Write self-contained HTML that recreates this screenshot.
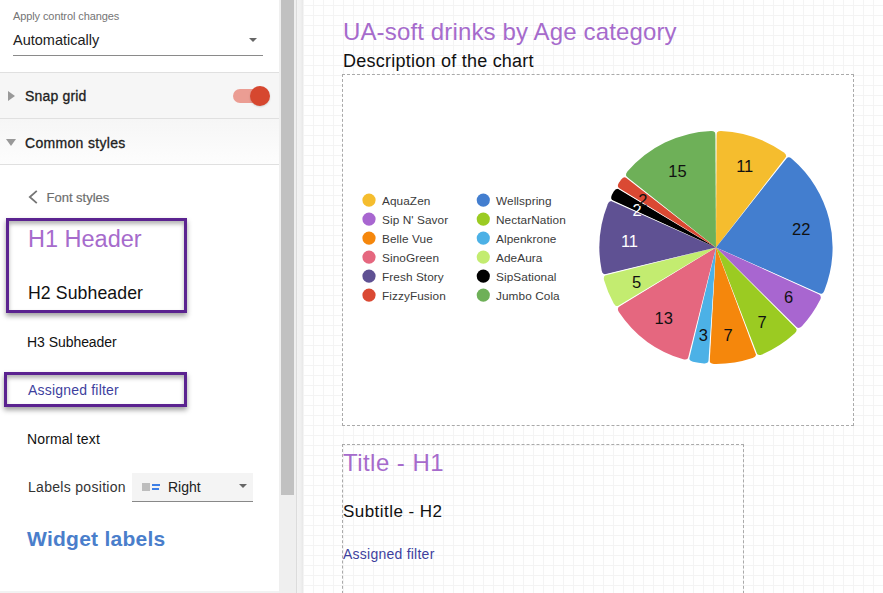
<!DOCTYPE html>
<html><head><meta charset="utf-8">
<style>
*{margin:0;padding:0;box-sizing:border-box;}
html,body{width:883px;height:593px;overflow:hidden;background:#fff;font-family:"Liberation Sans",sans-serif;}
.abs{position:absolute;}
#side{position:absolute;left:0;top:0;width:279px;height:593px;background:#fff;}
#scroll{position:absolute;left:279px;top:0;width:17px;height:593px;background:#efefef;}
#thumb{position:absolute;left:281px;top:0;width:13px;height:495px;background:#c1c1c1;}
#sep{position:absolute;left:296px;top:0;width:1px;height:593px;background:#dcdcdc;}
#strip{position:absolute;left:297px;top:0;width:6px;height:593px;background:linear-gradient(to right,#f3f3f3,#f0f0f0 60%,#e8e8e8);}
#canvas{position:absolute;left:302px;top:0;width:581px;height:593px;background-color:#fff;
 background-image:linear-gradient(to right,#f4f4f4 1px,transparent 1px),linear-gradient(to bottom,#f4f4f4 1px,transparent 1px);
 background-size:10px 10px;background-position:1px 5px;}
.t{position:absolute;white-space:nowrap;}
.med{-webkit-text-stroke:0.3px #212121;}
</style></head><body>
<div id="side">
  <div class="t" style="left:13px;top:10px;font-size:11px;letter-spacing:-0.1px;color:#757575;">Apply control changes</div>
  <div class="t" style="left:13px;top:31.5px;font-size:14.5px;color:#212121;">Automatically</div>
  <div class="abs" style="left:248.5px;top:37.5px;width:0;height:0;border-left:4px solid transparent;border-right:4px solid transparent;border-top:4.5px solid #666;"></div>
  <div class="abs" style="left:13px;top:55px;width:250px;height:1px;background:#8a8a8a;"></div>
  <div class="abs" style="left:0;top:72px;width:279px;height:1px;background:#e0e0e0;"></div>
  <div class="abs" style="left:0;top:73px;width:279px;height:45px;background:#f6f6f6;"></div>
  <div class="abs" style="left:0;top:118px;width:279px;height:1px;background:#e0e0e0;"></div>
  <div class="abs" style="left:0;top:119px;width:279px;height:45px;background:linear-gradient(#f6f6f6,#fdfdfd);"></div>
  <div class="abs" style="left:0;top:164px;width:279px;height:1px;background:#e0e0e0;"></div>
  <div class="abs" style="left:8px;top:91px;width:0;height:0;border-top:5px solid transparent;border-bottom:5px solid transparent;border-left:7px solid #999;"></div>
  <div class="t med" style="left:25px;top:88px;font-size:14px;letter-spacing:0.18px;color:#212121;">Snap grid</div>
  <div class="abs" style="left:233px;top:89px;width:34px;height:14px;border-radius:7px;background:#eb9d93;"></div>
  <div class="abs" style="left:250px;top:86px;width:20px;height:20px;border-radius:50%;background:#d6472f;box-shadow:0 1px 2px rgba(0,0,0,.15);"></div>
  <div class="abs" style="left:6px;top:139px;width:0;height:0;border-left:5px solid transparent;border-right:5px solid transparent;border-top:7px solid #999;"></div>
  <div class="t med" style="left:25px;top:135px;font-size:14px;letter-spacing:0.32px;color:#212121;">Common styles</div>
  <svg class="abs" style="left:28px;top:190px;" width="12" height="15"><path d="M8.8,0.8 L1.8,7 L8.8,13.2" fill="none" stroke="#757575" stroke-width="1.8"/></svg>
  <div class="t" style="left:46.5px;top:190px;font-size:13px;color:#6e6e6e;-webkit-text-stroke:0.2px #6e6e6e;">Font styles</div>
  <div class="abs" style="left:6px;top:218px;width:181px;height:95px;border:3px solid #5b2390;box-shadow:0 3px 5px rgba(0,0,0,.38), inset 0 3px 4px rgba(0,0,0,.3);"></div>
  <div class="t" style="left:28px;top:226px;font-size:23.5px;letter-spacing:0px;color:#a66bcc;">H1 Header</div>
  <div class="t" style="left:28px;top:283px;font-size:17.7px;letter-spacing:0.08px;color:#111;">H2 Subheader</div>
  <div class="t" style="left:27px;top:334px;font-size:14px;letter-spacing:-0.05px;color:#111;">H3 Subheader</div>
  <div class="abs" style="left:4px;top:372px;width:183px;height:35px;border:3px solid #5b2390;box-shadow:0 3px 5px rgba(0,0,0,.38), inset 0 3px 4px rgba(0,0,0,.3);"></div>
  <div class="t" style="left:28px;top:382px;font-size:14px;letter-spacing:0.2px;color:#3e3f9e;">Assigned filter</div>
  <div class="t" style="left:27px;top:430.5px;font-size:14px;letter-spacing:0.12px;color:#111;">Normal text</div>
  <div class="t" style="left:28px;top:479px;font-size:14px;letter-spacing:0.3px;color:#333;">Labels position</div>
  <div class="abs" style="left:132px;top:473px;width:121px;height:29px;background:#f4f4f4;border-bottom:1px solid #888;"></div>
  <div class="abs" style="left:142px;top:483px;width:8px;height:8px;background:#bdbdbd;"></div>
  <div class="abs" style="left:152px;top:483.5px;width:8px;height:2px;background:#3d7fe6;"></div>
  <div class="abs" style="left:152px;top:488.3px;width:6.5px;height:2px;background:#3d7fe6;"></div>
  <div class="t" style="left:168px;top:479px;font-size:14px;color:#212121;">Right</div>
  <div class="abs" style="left:238.5px;top:483.7px;width:0;height:0;border-left:4.2px solid transparent;border-right:4.2px solid transparent;border-top:4.6px solid #666;"></div>
  <div class="t" style="left:27px;top:527px;font-size:21px;letter-spacing:0.25px;font-weight:bold;color:#4a7ecb;">Widget labels</div>
  <div class="abs" style="left:0;top:591px;width:279px;height:2px;background:#f2f2f2;"></div>
</div>
<div id="scroll"></div>
<div id="thumb"></div>
<div id="sep"></div>
<div id="canvas"></div>
<div id="strip"></div>
<div class="t" style="left:343px;top:18px;font-size:24px;letter-spacing:0.14px;color:#a66bcc;">UA-soft drinks by Age category</div>
<div class="t" style="left:343px;top:51px;font-size:18px;letter-spacing:0.24px;color:#111;">Description of the chart</div>
<div class="abs" style="left:342px;top:74px;width:512px;height:352px;border:1px dashed #aaa;background:#fff;"></div>
<div class="abs" style="left:342px;top:444px;width:402px;height:160px;border:1px dashed #aaa;"></div>
<div class="t" style="left:343px;top:449px;font-size:24px;letter-spacing:0.45px;color:#a66bcc;">Title - H1</div>
<div class="t" style="left:343px;top:501.5px;font-size:17px;letter-spacing:0.45px;color:#111;">Subtitle - H2</div>
<div class="t" style="left:343px;top:545.5px;font-size:14px;letter-spacing:0.24px;color:#3e3f9e;">Assigned filter</div>
<svg class="abs" style="left:0;top:0;" width="883" height="593"><path d="M716,247.4 L716.00,135.80 Q716.00,130.80 721.00,130.91 A116.6,116.6 0 0 1 783.91,152.62 Q787.91,155.61 784.83,159.55 Z" fill="#f5bd2e" /><path d="M716,247.4 L784.83,159.55 Q787.91,155.61 791.78,158.78 A116.6,116.6 0 0 1 824.28,290.65 Q822.33,295.25 817.77,293.20 Z" fill="#437ecf" /><path d="M716,247.4 L817.77,293.20 Q822.33,295.25 820.18,299.77 A116.6,116.6 0 0 1 801.91,326.24 Q798.45,329.85 794.91,326.31 Z" fill="#a866d0" /><path d="M716,247.4 L794.91,326.31 Q798.45,329.85 794.84,333.31 A116.6,116.6 0 0 1 761.98,354.55 Q757.35,356.42 755.57,351.75 Z" fill="#9bcb22" /><path d="M716,247.4 L755.57,351.75 Q757.35,356.42 752.64,358.10 A116.6,116.6 0 0 1 713.96,363.98 Q708.96,363.79 709.26,358.80 Z" fill="#f5870c" /><path d="M716,247.4 L709.26,358.80 Q708.96,363.79 703.98,363.38 A116.6,116.6 0 0 1 692.97,361.70 Q688.10,360.61 689.29,355.76 Z" fill="#4cb1e6" /><path d="M716,247.4 L689.29,355.76 Q688.10,360.61 683.27,359.31 A116.6,116.6 0 0 1 618.89,311.94 Q616.22,307.72 620.49,305.13 Z" fill="#e5677f" /><path d="M716,247.4 L620.49,305.13 Q616.22,307.72 613.72,303.39 A116.6,116.6 0 0 1 604.09,280.13 Q602.79,275.30 607.64,274.11 Z" fill="#c3ec70" /><path d="M716,247.4 L607.64,274.11 Q602.79,275.30 601.70,270.43 A116.6,116.6 0 0 1 607.72,204.15 Q609.67,199.55 614.23,201.60 Z" fill="#5f5193" /><path d="M716,247.4 L614.23,201.60 Q609.67,199.55 611.82,195.03 A116.6,116.6 0 0 1 613.72,191.41 Q616.22,187.08 620.49,189.67 Z" fill="#000000" /><path d="M716,247.4 L620.49,189.67 Q616.22,187.08 618.89,182.86 A116.6,116.6 0 0 1 621.22,179.49 Q624.21,175.49 628.15,178.57 Z" fill="#da4933" /><path d="M716,247.4 L628.15,178.57 Q624.21,175.49 627.38,171.62 A116.6,116.6 0 0 1 711.00,130.91 Q716.00,130.80 716.00,135.80 Z" fill="#6eb058" /><path d="M716,247.4 L715.35,127.80 L716.65,127.80 Z" fill="#fff"/><path d="M716,247.4 L789.25,152.85 L790.27,153.66 Z" fill="#fff"/><path d="M716,247.4 L825.33,295.89 L824.79,297.08 Z" fill="#fff"/><path d="M716,247.4 L801.03,331.51 L800.11,332.43 Z" fill="#fff"/><path d="M716,247.4 L759.02,359.00 L757.80,359.46 Z" fill="#fff"/><path d="M716,247.4 L709.43,366.82 L708.13,366.74 Z" fill="#fff"/><path d="M716,247.4 L688.01,363.68 L686.75,363.37 Z" fill="#fff"/><path d="M716,247.4 L613.99,309.83 L613.31,308.72 Z" fill="#fff"/><path d="M716,247.4 L600.03,276.65 L599.72,275.39 Z" fill="#fff"/><path d="M716,247.4 L606.67,198.91 L607.21,197.72 Z" fill="#fff"/><path d="M716,247.4 L613.31,186.08 L613.99,184.97 Z" fill="#fff"/><path d="M716,247.4 L621.45,174.15 L622.26,173.13 Z" fill="#fff"/><g font-family="Liberation Sans, sans-serif" font-size="16.5" text-anchor="middle"><text x="744.7" y="171.7" fill="#111">11</text><text x="801.3" y="234.9" fill="#111">22</text><text x="788.5" y="302.9" fill="#111">6</text><text x="762.0" y="327.6" fill="#111">7</text><text x="728.1" y="340.6" fill="#111">7</text><text x="703.4" y="340.8" fill="#111">3</text><text x="663.8" y="323.7" fill="#111">13</text><text x="636.7" y="287.7" fill="#111">5</text><text x="629.5" y="247.1" fill="#fff">11</text><text x="637.2" y="215.6" fill="#fff">2</text><text x="642.9" y="206.4" fill="#111">2</text><text x="677.4" y="176.6" fill="#111">15</text></g><g font-family="Liberation Sans, sans-serif" font-size="11.8" letter-spacing="0.08" fill="#3a3a3a"><circle cx="369" cy="200.1" r="6.6" fill="#f5bd2e"/><text x="382" y="204.8">AquaZen</text><circle cx="369" cy="219.1" r="6.6" fill="#a866d0"/><text x="382" y="223.8">Sip N' Savor</text><circle cx="369" cy="238.1" r="6.6" fill="#f5870c"/><text x="382" y="242.8">Belle Vue</text><circle cx="369" cy="257.1" r="6.6" fill="#e5677f"/><text x="382" y="261.8">SinoGreen</text><circle cx="369" cy="276.1" r="6.6" fill="#5f5193"/><text x="382" y="280.8">Fresh Story</text><circle cx="369" cy="295.1" r="6.6" fill="#da4933"/><text x="382" y="299.8">FizzyFusion</text><circle cx="483.3" cy="200.1" r="6.6" fill="#437ecf"/><text x="496" y="204.8">Wellspring</text><circle cx="483.3" cy="219.1" r="6.6" fill="#9bcb22"/><text x="496" y="223.8">NectarNation</text><circle cx="483.3" cy="238.1" r="6.6" fill="#4cb1e6"/><text x="496" y="242.8">Alpenkrone</text><circle cx="483.3" cy="257.1" r="6.6" fill="#c3ec70"/><text x="496" y="261.8">AdeAura</text><circle cx="483.3" cy="276.1" r="6.6" fill="#000000"/><text x="496" y="280.8">SipSational</text><circle cx="483.3" cy="295.1" r="6.6" fill="#6eb058"/><text x="496" y="299.8">Jumbo Cola</text></g></svg>
</body></html>
